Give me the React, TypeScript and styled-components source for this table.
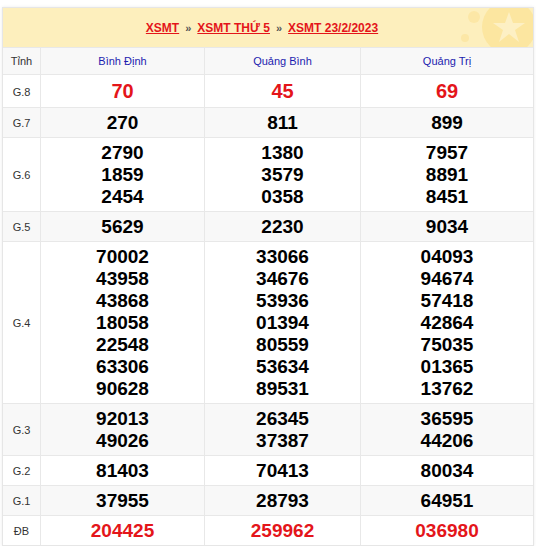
import React from "react";
import styled, { createGlobalStyle } from "styled-components";

const Global = createGlobalStyle`
  html, body { margin: 0; padding: 0; background: #fff; }
  body { font-family: "Liberation Sans", Arial, sans-serif; }
`;

const Page = styled.div`
  padding: 7px 2px 0 2px;
  width: 532px;
`;

const Card = styled.div`
  border: 1px solid #e6e6e6;
  box-shadow: 0 0 3px rgba(0, 0, 0, 0.08);
  background: #fff;
`;

const TitleBar = styled.div`
  position: relative;
  height: 39px;
  background: #fdefbd;
  display: flex;
  align-items: center;
  justify-content: center;
  padding-right: 12px;
  overflow: hidden;
  font-size: 12px;
  font-weight: bold;
  color: #333;
`;

const TitleLink = styled.a`
  color: #e4151a;
  text-decoration: underline;
  font-weight: bold;
`;

const Sep = styled.span`
  color: #555;
  margin: 0 6px;
  font-size: 11px;
`;

const Deco = styled.svg`
  position: absolute;
  right: 0;
  top: 0;
`;

const Grid = styled.div`
  display: grid;
  grid-template-columns: 38px 164px 156px 1fr;
`;

const Cell = styled.div<{ $alt?: boolean; $last?: boolean }>`
  background: ${(p) => (p.$alt ? "#f8f8f8" : "#fff")};
  border-top: 1px solid #e8e8e8;
  border-left: ${(p) => (p.$last ? "none" : "0")};
  border-right: ${(p) => (p.$last ? "none" : "1px solid #e8e8e8")};
  display: flex;
  flex-direction: column;
  align-items: center;
  justify-content: center;
  padding: 4px 0 3px;
`;

const HeadCell = styled(Cell)`
  height: 26px;
  padding: 0;
  font-size: 11px;
  color: #1c1caf;
`;

const TinhLabel = styled.span`
  color: #333;
  font-size: 11px;
`;

const Label = styled.span`
  color: #333;
  font-size: 11px;
`;

const Num = styled.span<{ $red?: boolean; $big?: boolean }>`
  font-size: ${(p) => (p.$big ? "20px" : "19px")};
  line-height: ${(p) => (p.$big ? "25px" : "22px")};
  font-weight: bold;
  color: ${(p) => (p.$red ? "#e4151a" : "#000")};
`;

type Row = { label: string; values: string[][]; red?: boolean; big?: boolean };

const rows: Row[] = [
  { label: "G.8", values: [["70"], ["45"], ["69"]], red: true, big: true },
  { label: "G.7", values: [["270"], ["811"], ["899"]] },
  {
    label: "G.6",
    values: [
      ["2790", "1859", "2454"],
      ["1380", "3579", "0358"],
      ["7957", "8891", "8451"],
    ],
  },
  { label: "G.5", values: [["5629"], ["2230"], ["9034"]] },
  {
    label: "G.4",
    values: [
      ["70002", "43958", "43868", "18058", "22548", "63306", "90628"],
      ["33066", "34676", "53936", "01394", "80559", "53634", "89531"],
      ["04093", "94674", "57418", "42864", "75035", "01365", "13762"],
    ],
  },
  {
    label: "G.3",
    values: [
      ["92013", "49026"],
      ["26345", "37387"],
      ["36595", "44206"],
    ],
  },
  { label: "G.2", values: [["81403"], ["70413"], ["80034"]] },
  { label: "G.1", values: [["37955"], ["28793"], ["64951"]] },
  { label: "ĐB", values: [["204425"], ["259962"], ["036980"]], red: true },
];

const provinces = ["Bình Định", "Quảng Bình", "Quảng Trị"];

export default function App() {
  return (
    <>
      <Global />
      <Page>
        <Card>
          <TitleBar>
            <TitleLink>XSMT</TitleLink>
            <Sep>»</Sep>
            <TitleLink>XSMT THỨ 5</TitleLink>
            <Sep>»</Sep>
            <TitleLink>XSMT 23/2/2023</TitleLink>
            <Deco width="80" height="39" viewBox="0 0 80 39">
              <circle cx="56" cy="19" r="27" fill="#fce6a0" />
              <circle cx="21" cy="9" r="6" fill="#fce7a6" />
              <circle cx="12" cy="30" r="4" fill="#fce7a6" />
              <polygon
                points="56,4 60,15 72,15 62,22 66,34 56,26 46,34 50,22 40,15 52,15"
                fill="#fdf0c4"
              />
            </Deco>
          </TitleBar>
          <Grid>
            <HeadCell $alt>
              <TinhLabel>Tỉnh</TinhLabel>
            </HeadCell>
            {provinces.map((p, i) => (
              <HeadCell key={p} $alt $last={i === 2}>
                {p}
              </HeadCell>
            ))}
            {rows.map((r, ri) => {
              const alt = ri % 2 === 1;
              return (
                <React.Fragment key={r.label}>
                  <Cell $alt={alt}>
                    <Label>{r.label}</Label>
                  </Cell>
                  {r.values.map((col, ci) => (
                    <Cell key={ci} $alt={alt} $last={ci === 2}>
                      {col.map((n) => (
                        <Num key={n} $red={r.red} $big={r.big}>
                          {n}
                        </Num>
                      ))}
                    </Cell>
                  ))}
                </React.Fragment>
              );
            })}
          </Grid>
        </Card>
      </Page>
    </>
  );
}
